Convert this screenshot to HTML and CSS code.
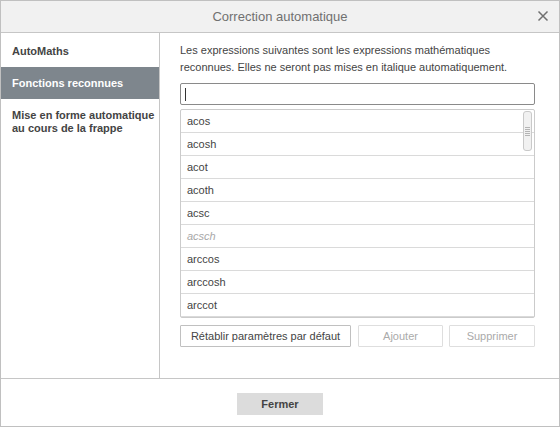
FILE: index.html
```html
<!DOCTYPE html>
<html lang="fr">
<head>
<meta charset="utf-8">
<title>Correction automatique</title>
<link rel="stylesheet" href="styles.css">
</head>
<body>
<div class="dialog">
  <div class="header">
    <span class="title">Correction automatique</span>
    <svg class="close" width="12" height="12" viewBox="0 0 12 12"><path d="M1.5 1.5 L10.5 10.5 M10.5 1.5 L1.5 10.5" stroke="#707070" stroke-width="1.5" fill="none"/></svg>
  </div>
  <div class="main">
    <div class="side">
      <div class="item">AutoMaths</div>
      <div class="item active">Fonctions reconnues</div>
      <div class="item multi">Mise en forme automatique<br>au cours de la frappe</div>
    </div>
    <div class="content">
      <p class="desc">Les expressions suivantes sont les expressions mathématiques reconnues. Elles ne seront pas mises en italique automatiquement.</p>
      <div class="input"><span class="caret"></span></div>
      <div class="list">
        <div class="row">acos</div>
        <div class="row">acosh</div>
        <div class="row">acot</div>
        <div class="row">acoth</div>
        <div class="row">acsc</div>
        <div class="row dim">acsch</div>
        <div class="row">arccos</div>
        <div class="row">arccosh</div>
        <div class="row">arccot</div>
        <div class="thumb"><span class="grip"></span></div>
      </div>
      <div class="buttons">
        <div class="btn reset">Rétablir paramètres par défaut</div>
        <div class="btn disabled add">Ajouter</div>
        <div class="btn disabled del">Supprimer</div>
      </div>
    </div>
  </div>
  <div class="footer">
    <div class="close-btn">Fermer</div>
  </div>
</div>
</body>
</html>
```
FILE: styles.css
```css
html, body { margin: 0; padding: 0; background: #fff; }
body { font-family: "Liberation Sans", Arial, sans-serif; font-size: 11px; color: #444; }
.dialog {
  width: 560px; height: 427px; box-sizing: border-box;
  border: 1px solid #c0c0c0; display: flex; flex-direction: column;
}
.header {
  height: 31px; background: #f1f1f1; border-bottom: 1px solid #c6c6c6;
  display: flex; align-items: center; justify-content: center; position: relative;
}
.title { font-size: 13px; color: #707070; }
.close { position: absolute; right: 10px; top: 9px; }
.main { flex: 1; display: flex; border-bottom: 1px solid #c6c6c6; }
.side { width: 158px; border-right: 1px solid #c6c6c6; padding-top: 2px; }
.item { height: 32px; line-height: 32px; padding-left: 11px; font-weight: bold; color: #444; }
.item.active { background: #7e868d; color: #fff; }
.item.multi { height: auto; line-height: 13px; padding-top: 10px; }
.content { flex: 1; padding: 9px 24px 0 20px; }
.desc { margin: 0 0 7px; line-height: 17px; }
.input {
  height: 20px; border: 1px solid #8a8a8a; border-radius: 2px;
  display: flex; align-items: center; padding-left: 4px;
}
.caret { width: 1px; height: 13px; background: #333; }
.list {
  margin-top: 4px; border: 1px solid #cbcbcb; border-radius: 2px; position: relative;
}
.row { height: 22px; line-height: 22px; padding-left: 6px; border-bottom: 1px solid #dadada; }
.row:last-of-type { border-bottom: none; }
.row.dim { color: #a8a8a8; font-style: italic; }
.thumb {
  position: absolute; right: 2px; top: 1px; width: 7px; height: 38px;
  border: 1px solid #c9c9c9; border-radius: 3px; background: #f1f1f1;
  display: flex; align-items: center; justify-content: center;
}
.grip {
  width: 5px; height: 9px;
  background: repeating-linear-gradient(to bottom, #b4b4b4 0, #b4b4b4 1px, transparent 1px, transparent 2px);
}
.buttons { display: flex; margin-top: 7px; gap: 7px; }
.btn {
  height: 20px; line-height: 20px; text-align: center; border: 1px solid #c0c0c0;
  border-radius: 1px; color: #444; background: #fff;
}
.btn.reset { width: 169px; }
.btn.add { width: 83px; }
.btn.del { width: 84px; margin-left: -1px; }
.btn.disabled { color: #aaa; border-color: #dedede; }
.footer { height: 47px; display: flex; align-items: flex-start; padding-left: 236px; }
.close-btn {
  margin-top: 14px; width: 86px; height: 22px; line-height: 22px; text-align: center;
  background: #dcdcdc; font-weight: bold; color: #444;
}
```
